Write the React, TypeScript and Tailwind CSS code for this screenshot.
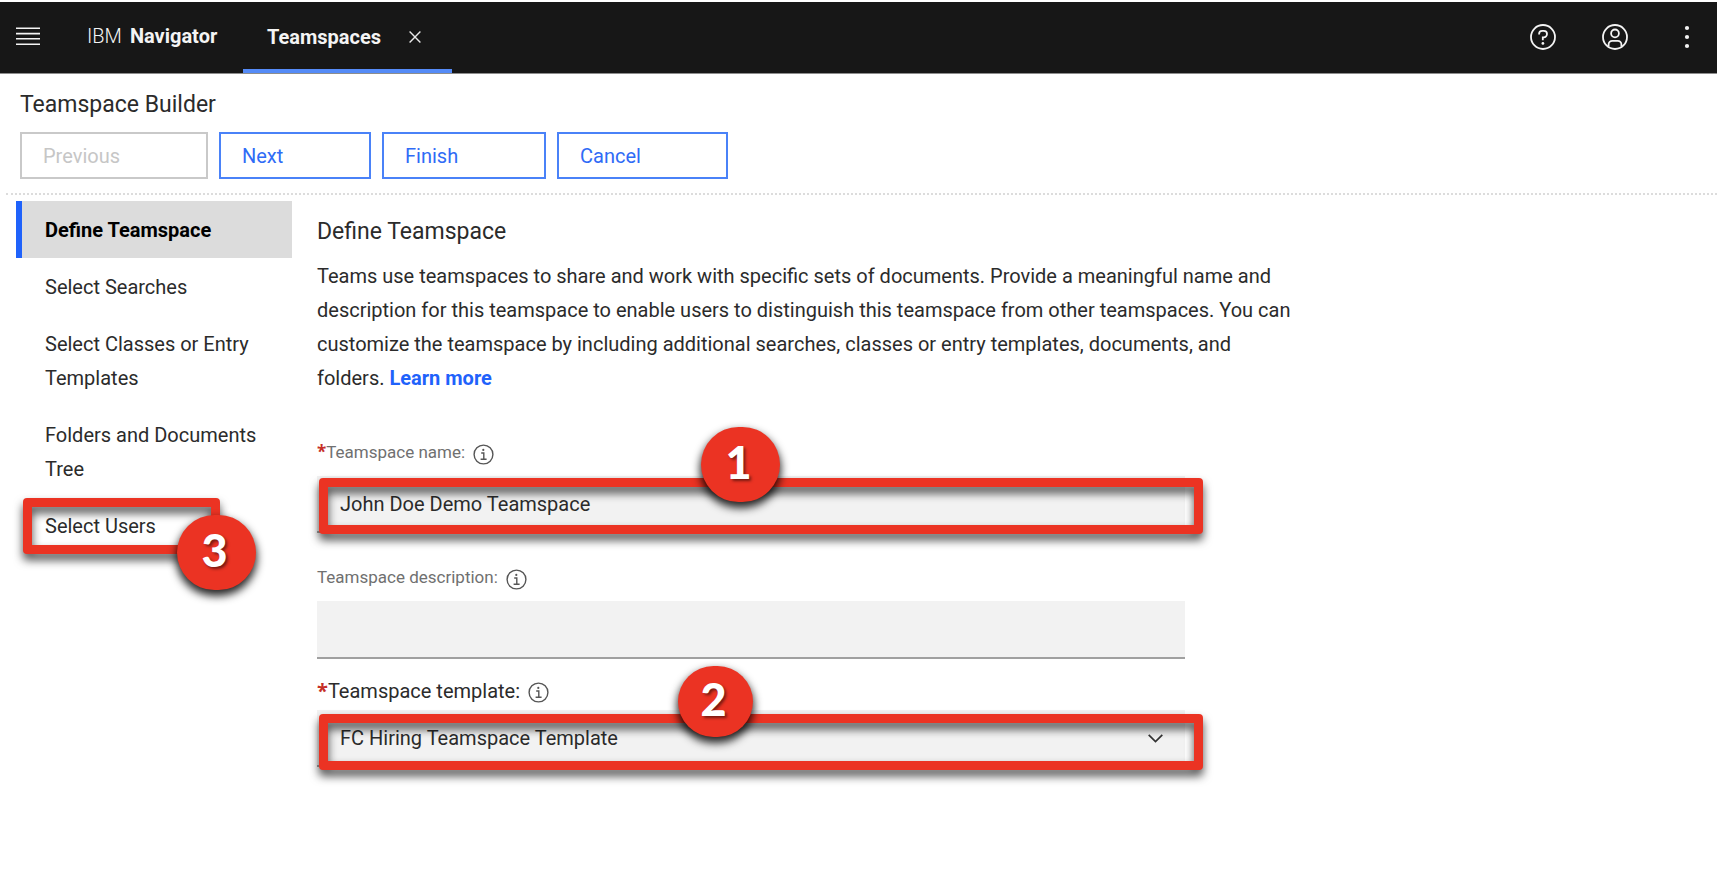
import { useState, type ReactNode } from "react";

const steps = [
  "Define Teamspace",
  "Select Searches",
  "Select Classes or Entry Templates",
  "Folders and Documents Tree",
  "Select Users",
];

function MenuIcon() {
  return (
    <svg width="24" height="20" viewBox="0 0 24 20" fill="none" stroke="#f4f4f4" strokeWidth="1.6" aria-hidden="true">
      <path d="M0 2.2h24M0 7.6h24M0 12.8h24M0 18.2h24" />
    </svg>
  );
}

function CloseIcon() {
  return (
    <svg width="12" height="12" viewBox="0 0 12 12" fill="none" stroke="#e8e8e8" strokeWidth="1.4" aria-hidden="true">
      <path d="M0.6 0.6l10.8 10.8M11.4 0.6L0.6 11.4" />
    </svg>
  );
}

function HelpIcon() {
  return (
    <svg width="26" height="26" viewBox="0 0 26 26" fill="none" stroke="#f4f4f4" strokeWidth="1.8" aria-hidden="true">
      <circle cx="13" cy="13" r="12" />
      <path d="M9.1 10.4v-.5a3 3 0 0 1 3-3h1.7a3.2 3.2 0 0 1 0 6.4h-1v2.9" />
      <circle cx="12.9" cy="19.4" r="1.4" fill="#f4f4f4" stroke="none" />
    </svg>
  );
}

function UserIcon() {
  return (
    <svg width="26" height="26" viewBox="0 0 26 26" fill="none" stroke="#f4f4f4" strokeWidth="1.8" aria-hidden="true">
      <circle cx="13" cy="13" r="12" />
      <circle cx="13" cy="9.4" r="3.9" />
      <path d="M6.6 22.6v-2.1a3.6 3.6 0 0 1 3.6-3.6h5.6a3.6 3.6 0 0 1 3.6 3.6v2.1" />
    </svg>
  );
}

function OverflowIcon() {
  return (
    <svg width="26" height="26" viewBox="0 0 26 26" fill="#f4f4f4" aria-hidden="true">
      <circle cx="13" cy="4" r="2.1" />
      <circle cx="13" cy="13" r="2.1" />
      <circle cx="13" cy="22" r="2.1" />
    </svg>
  );
}

function InfoIcon() {
  return (
    <svg width="21" height="21" viewBox="0 0 21 21" fill="none" stroke="#565656" strokeWidth="1.4" aria-hidden="true">
      <circle cx="10.5" cy="10.5" r="9.4" />
      <path d="M8.2 9h2.6v6.3M7.6 15.3h6" />
      <circle cx="10.3" cy="5.9" r="1.1" fill="#565656" stroke="none" />
    </svg>
  );
}

function Chevron() {
  return (
    <svg width="15" height="9" viewBox="0 0 15 9" fill="none" stroke="#333333" strokeWidth="1.7" aria-hidden="true">
      <path d="M0.7 0.8l6.8 6.8 6.8-6.8" />
    </svg>
  );
}

function Frame({ className }: { className: string }) {
  return (
    <span
      className={`pointer-events-none absolute h-14 rounded-[4px] border-[9px] border-[#eb3323] drop-shadow-[0_6px_5px_rgba(0,0,0,0.7)] ${className}`}
    />
  );
}

function Marker({ className, children }: { className: string; children: ReactNode }) {
  return (
    <span
      className={`pointer-events-none absolute flex items-center justify-center rounded-full bg-[#eb3323] pr-1 pb-1 font-[Lato,sans-serif] text-[45px] leading-none font-black text-white shadow-[0_5px_9px_1px_rgba(0,0,0,0.85)] [text-shadow:2px_2px_3px_rgba(0,0,0,0.5)] ${className}`}
    >
      {children}
    </span>
  );
}

function Required() {
  return <span className="font-['Open_Sans',sans-serif] leading-none font-bold text-[#c62f28]">*</span>;
}

function InfoButton({ label }: { label: string }) {
  return (
    <button type="button" aria-label={label} className="mt-0.5 ml-2">
      <InfoIcon />
    </button>
  );
}

function ActionButton({ className, disabled, children }: { className: string; disabled?: boolean; children: ReactNode }) {
  return (
    <button
      type="button"
      disabled={disabled}
      className={`h-[47px] border-2 border-[#4a82f8] pl-[21px] text-left text-[#2f6bf6] disabled:border-[#c9c9c9] disabled:text-[#c6c6c6] ${className}`}
    >
      {children}
    </button>
  );
}

export default function App() {
  const [current, setCurrent] = useState(0);
  const [name, setName] = useState("John Doe Demo Teamspace");
  const [description, setDescription] = useState("");

  return (
    <div className="min-h-screen bg-white pt-0.5 pr-[5px] font-[Roboto,sans-serif] text-[20px] text-[#2b2b2b]">
      <header className="flex h-[72px] items-stretch border-b border-[#8d8d8d] bg-[#171717] text-[#f4f4f4]">
        <button type="button" aria-label="Menu" className="pb-1 pl-4">
          <MenuIcon />
        </button>
        <div className="flex w-[203px] items-center pb-1 pl-[47px] whitespace-nowrap">
          <span className="font-light">IBM</span>
          <span className="ml-2 font-bold">Navigator</span>
        </div>
        <div className="flex w-[209px] items-center gap-7 border-b-4 border-[#558bf7] pt-0.5 pl-6">
          <button type="button" className="font-bold">Teamspaces</button>
          <button type="button" aria-label="Close Teamspaces">
            <CloseIcon />
          </button>
        </div>
        <div className="ml-auto flex items-center gap-[46px] pr-[17px] pb-px">
          <button type="button" aria-label="Help"><HelpIcon /></button>
          <button type="button" aria-label="Account"><UserIcon /></button>
          <button type="button" aria-label="More"><OverflowIcon /></button>
        </div>
      </header>

      <section className="ml-1.5 border-b-2 border-dotted border-[#dcdcdc] pt-[14px] pb-[14px] pl-[14px]">
        <h1 className="text-[23px] leading-[34px]">Teamspace Builder</h1>
        <div className="mt-2.5 flex gap-[11px]">
          <ActionButton className="w-[188px]" disabled>Previous</ActionButton>
          <ActionButton className="w-[152px]">Next</ActionButton>
          <ActionButton className="w-[164px]">Finish</ActionButton>
          <ActionButton className="w-[171px]">Cancel</ActionButton>
        </div>
      </section>

      <div className="flex pt-1.5 pl-4">
        <nav className="w-[276px] shrink-0">
          <ol>
            {steps.map((step, i) => (
              <li key={step} className="relative">
                <button
                  type="button"
                  onClick={() => setCurrent(i)}
                  aria-current={i === current ? "step" : undefined}
                  className="w-full border-l-6 border-transparent pt-3 pr-5 pb-[11px] pl-[23px] text-left leading-[34px] aria-[current=step]:border-[#1f62fb] aria-[current=step]:bg-[#dcdcdc] aria-[current=step]:font-bold aria-[current=step]:text-black"
                >
                  {step}
                </button>
                {step === "Select Users" && (
                  <>
                    <Frame className="top-px left-[7px] w-[197px]" />
                    <Marker className="top-[18px] left-[161px] h-[75px] w-[79px]">3</Marker>
                  </>
                )}
              </li>
            ))}
          </ol>
        </nav>

        <main className="ml-[25px] flex-1 pt-[14px]">
          <h2 className="text-[23px] leading-[34px]">Define Teamspace</h2>
          <p className="mt-2.5 max-w-[980px] leading-[34px]">
            Teams use teamspaces to share and work with specific sets of documents. Provide a meaningful name and
            description for this teamspace to enable users to distinguish this teamspace from other teamspaces. You can
            customize the teamspace by including additional searches, classes or entry templates, documents, and
            folders.{" "}
            <a href="#learn-more" className="font-bold text-[#1f62fb]">Learn more</a>
          </p>

          <form className="mt-[43px] max-w-[868px]">
            <div className="flex h-[30px] items-center text-[17px] text-[#707070]">
              <label htmlFor="name"><Required />Teamspace name:</label>
              <InfoButton label="About teamspace name" />
            </div>
            <div className="relative mt-2">
              <input
                id="name"
                value={name}
                onChange={(e) => setName(e.target.value)}
                className="block h-[57px] w-full border-b-2 border-[#a0a0a0] bg-[#f2f2f2] px-[23px] outline-none"
              />
              <Frame className="top-0.5 -right-[18px] left-0.5" />
              <Marker className="-top-[49px] left-[384px] h-[75px] w-[79px]">1</Marker>
            </div>

            <div className="mt-[30px] flex h-[30px] items-center text-[17px] text-[#707070]">
              <label htmlFor="description">Teamspace description:</label>
              <InfoButton label="About teamspace description" />
            </div>
            <input
              id="description"
              value={description}
              onChange={(e) => setDescription(e.target.value)}
              className="mt-2 block h-[58px] w-full border-b-2 border-[#a0a0a0] bg-[#f2f2f2] px-[23px] outline-none"
            />

            <div className="mt-[17px] flex h-[30px] items-center">
              <label htmlFor="template"><Required />Teamspace template:</label>
              <InfoButton label="About teamspace template" />
            </div>
            <div className="relative mt-1">
              <select
                id="template"
                className="block h-[57px] w-full appearance-none border-b-2 border-[#a0a0a0] bg-[#f2f2f2] px-[23px] outline-none"
              >
                <option>FC Hiring Teamspace Template</option>
              </select>
              <span className="pointer-events-none absolute top-6 right-[22px]">
                <Chevron />
              </span>
              <Frame className="top-1 -right-[18px] left-0.5" />
              <Marker className="-top-11 left-[361px] h-[71px] w-[75px]">2</Marker>
            </div>
          </form>
        </main>
      </div>
    </div>
  );
}
